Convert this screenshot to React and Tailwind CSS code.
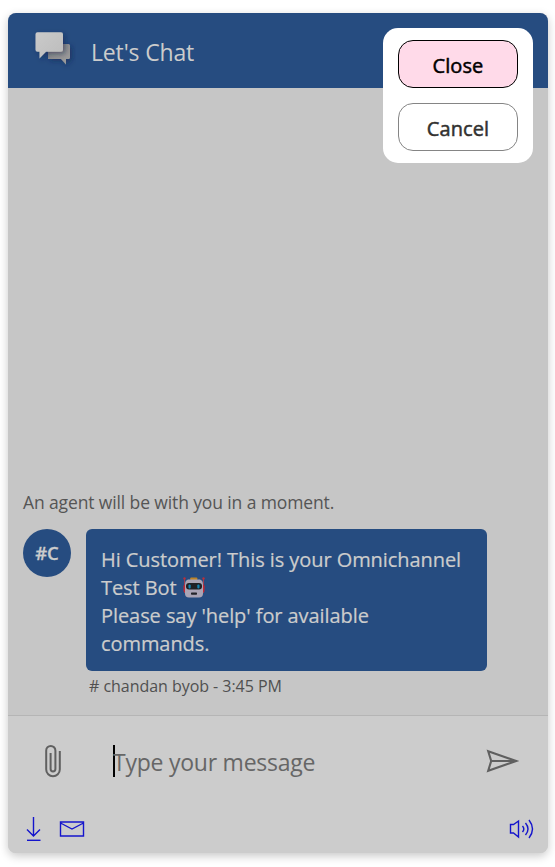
function ChatLogo() {
  return (
    <svg width="46" height="46" viewBox="0 0 46 46" className="shrink-0">
      <defs>
        <linearGradient id="front" x1="0" y1="0" x2="1" y2="1">
          <stop offset="0" stopColor="#cacaca" />
          <stop offset="1" stopColor="#bcbcbc" />
        </linearGradient>
        <linearGradient id="back" x1="0" y1="0" x2="1" y2="1">
          <stop offset="0" stopColor="#828282" />
          <stop offset="1" stopColor="#a0a0a0" />
        </linearGradient>
        <filter id="logoShadow" x="-30%" y="-30%" width="180%" height="180%">
          <feDropShadow dx="2" dy="2" stdDeviation="2.5" floodColor="#102448" floodOpacity="0.5" />
        </filter>
      </defs>
      <path d="M18 17h20.500a1.500 1.500 0 0 1 1.500 1.500v12a1.500 1.500 0 0 1-1.500 1.500H36v5.500L31 32H18z" fill="url(#back)" filter="url(#logoShadow)" />
      <path d="M7.500 5.300h23.500a2 2 0 0 1 2 2v15.500a2 2 0 0 1-2 2H16L9.500 31.500v-6.700H7.500a2 2 0 0 1-2-2V7.300a2 2 0 0 1 2-2z" fill="url(#front)" filter="url(#logoShadow)" />
    </svg>
  );
}

function Robot() {
  return (
    <svg width="22" height="22" viewBox="0 0 22 22" className="ml-[6px] inline-block align-[-4px]">
      <rect x="7.300" y="0.500" width="7" height="3" rx="0.800" fill="#bd8426" />
      <path d="M1.500 1v15M20.500 1v15" stroke="#9d3d50" strokeWidth="1" />
      <circle cx="1.500" cy="1.500" r="1.200" fill="#b92f3b" />
      <circle cx="20.500" cy="1.500" r="1.200" fill="#b92f3b" />
      <rect x="0.500" y="8" width="3" height="7" rx="1" fill="#c52632" />
      <rect x="18.500" y="8" width="3" height="7" rx="1" fill="#c52632" />
      <path d="M5 2.500h12q3 1 3 5v9q0 4-4 4H6q-4 0-4-4v-9q0-4 3-5z" fill="#aaa4b5" />
      <rect x="3" y="6" width="16" height="6.500" rx="3" fill="#202126" />
      <rect x="5.500" y="7.500" width="2.200" height="4" rx="1" fill="#1585b4" />
      <rect x="14.300" y="7.500" width="2.200" height="4" rx="1" fill="#1585b4" />
      <rect x="8" y="15.500" width="6" height="2.200" rx="0.700" fill="#24242a" />
    </svg>
  );
}

function PaperclipIcon() {
  return (
    <svg width="18" height="34" viewBox="0 0 18 34" fill="none" stroke="#606060" strokeWidth="2" className="shrink-0">
      <path d="M15.800 7v18.500a6.700 6.700 0 0 1-13.600 0V6.500a4.600 4.600 0 0 1 9.200 0V25a2.400 2.400 0 0 1-4.800 0V9" />
    </svg>
  );
}

function SendIcon() {
  return (
    <svg width="34" height="24" viewBox="0 0 34 24" fill="none" stroke="#606060" strokeWidth="2.100" className="shrink-0">
      <path d="M2.200 2.200l28 9.800-28 9.800 3-9.800zM5 12h26" />
    </svg>
  );
}

function DownloadIcon() {
  return (
    <svg width="16" height="26" viewBox="0 0 16 26" fill="none" stroke="#1414cc" strokeWidth="1.400">
      <path d="M7.500 1v19M1 13.500l6.500 6.500 6.500-6.500" />
      <path d="M1 24.300h13.500" />
    </svg>
  );
}

function MailIcon() {
  return (
    <svg width="26" height="18" viewBox="0 0 26 18" fill="none" stroke="#1414cc" strokeWidth="1.400">
      <path d="M1.500 2h23v14h-23zM1.500 3L13 9l11.500-6" />
    </svg>
  );
}

function SpeakerIcon() {
  return (
    <svg width="27" height="22" viewBox="0 0 27 22" fill="none" stroke="#1414cc" strokeWidth="1.400">
      <path d="M2.500 6.500h3L10.500 3v16l-5-4h-3z" />
      <path d="M14.500 8q2.600 3 0 6M17.500 5q5 6 0 12M21 2q7 9 0 18" />
    </svg>
  );
}

export default function App() {
  return (
    <div className="h-[867px] w-[555px] overflow-hidden bg-white pt-[13px] pl-2 font-['Open_Sans','Noto_Sans',sans-serif]">
      <main className="relative flex h-[840px] w-[540px] flex-col rounded-lg bg-[#cccccc] shadow-[0_3px_10px_rgba(0,0,0,0.22)]">
        <header className="flex h-[75px] shrink-0 items-start rounded-t-lg bg-[#264c80] pt-[14px] pl-[22px]">
          <ChatLogo />
          <h1 className="mt-[8px] ml-[15px] text-[23px] leading-[34px] tracking-[-0.15px] whitespace-nowrap text-[#cccccc]">Let's Chat</h1>
        </header>

        <section className="flex h-[627px] shrink-0 flex-col justify-end bg-[#c6c6c6] px-[15px] pb-[17px]">
          <p className="mb-[15px] text-[17.500px] leading-6 tracking-[-0.12px] whitespace-nowrap text-[#555555]">An agent will be with you in a moment.</p>
          <div className="flex items-start">
            <div className="flex size-12 shrink-0 items-center justify-center rounded-full bg-[#264c80] text-[18.500px] font-semibold text-[#cccccc] [-webkit-text-stroke:0.3px_#cccccc]">#C</div>
            <div className="ml-[15px] flex h-[142px] w-[401px] flex-col rounded-md bg-[#264c80] pt-[17px] pl-[15px] text-[20px] leading-7 tracking-[-0.07px] whitespace-nowrap text-[#cccccc] [-webkit-text-stroke:0.2px_#cccccc]">
              <p><span>Hi Customer! This is your Omnichannel</span></p>
              <p><span>Test Bot</span><Robot /></p>
              <p><span>Please say 'help' for available</span></p>
              <p><span>commands.</span></p>
            </div>
          </div>
          <p className="mt-[4px] ml-[66px] text-[16px] leading-[23px] tracking-[-0.04px] whitespace-nowrap text-[#505050]"># chandan byob - 3:45 PM</p>
        </section>

        <section className="flex h-[138px] flex-col rounded-b-lg border-t border-[#b5b5b5] bg-[#cccccc]">
          <div className="flex h-[90px] items-center pl-[36px]">
            <PaperclipIcon />
            <div className="ml-[51px] flex h-8 w-[373px] items-center">
              <span className="h-8 w-[2px] shrink-0 bg-black" />
              <span className="mt-[2px] -ml-[2px] text-[23px] leading-8 tracking-[-0.24px] whitespace-nowrap text-[#666666]">Type your message</span>
            </div>
            <SendIcon />
          </div>
          <div className="flex h-[46px] items-center pl-[18px]">
            <DownloadIcon />
            <span className="ml-[17px]"><MailIcon /></span>
            <span className="ml-[423px]"><SpeakerIcon /></span>
          </div>
        </section>

        <div className="absolute top-[15px] left-[375px] flex h-[135px] w-[150px] flex-col items-center gap-[15px] rounded-[15px] bg-white pt-3 text-[20px] font-medium tracking-[0.1px]">
          <button className="h-12 w-[120px] rounded-[15px] border border-black bg-[#ffdae9] pt-[3px] text-black [-webkit-text-stroke:0.5px_black]">Close</button>
          <button className="h-12 w-[120px] rounded-[15px] border border-[#858585] bg-white pt-[3px] text-[#323130] [-webkit-text-stroke:0.5px_#323130]">Cancel</button>
        </div>
      </main>
    </div>
  );
}
